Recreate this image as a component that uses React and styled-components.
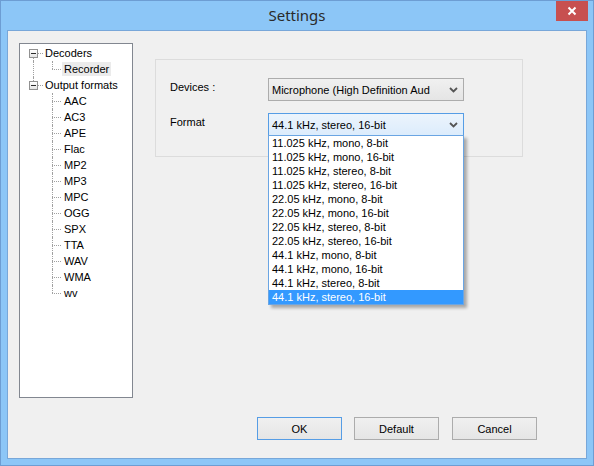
import React from "react";
import styled, { createGlobalStyle } from "styled-components";

const Global = createGlobalStyle`
  html, body { margin: 0; padding: 0; background: #ffffff; }
  body { font-family: "Liberation Sans", Arial, sans-serif; font-size: 11px; color: #000; }
  * { box-sizing: border-box; }
`;

const Window = styled.div`
  width: 594px;
  height: 466px;
  background: #8cc6f7;
  border: 1px solid #6d9dd3;
  display: flex;
  flex-direction: column;
`;

const TitleBar = styled.div`
  height: 29px;
  flex: none;
  display: grid;
  grid-template-columns: 1fr auto 1fr;
`;

const Title = styled.div`
  grid-column: 2;
  font-family: "Noto Sans", "Open Sans", sans-serif;
  font-size: 15px;
  line-height: 29px;
  color: #2a2a2a;
`;

const CloseButton = styled.div`
  grid-column: 3;
  justify-self: end;
  align-self: start;
  width: 32px;
  height: 20px;
  margin-right: 5px;
  background: #c75050;
  display: flex;
  align-items: center;
  justify-content: center;
`;

const Client = styled.div`
  flex: 1;
  margin: 0 6px 6px 6px;
  background: #f0f0f0;
  border: 1px solid #78a7d9;
  padding: 12px 49px 18px 11px;
  display: flex;
  flex-direction: column;
`;

const Body = styled.div`
  display: flex;
  align-items: flex-start;
  gap: 22px;
`;

const TreeBox = styled.div`
  width: 114px;
  height: 355px;
  flex: none;
  background: #ffffff;
  border: 1px solid #828790;
  padding-top: 1px;
`;

const Row = styled.div`
  display: flex;
  height: 16px;
`;

const vertical = {
  full: "top: 0; bottom: 0;",
  top: "top: 0; height: 8px;",
  bottom: "top: 8px; bottom: 0;",
  none: "display: none;",
};

const Branch = styled.span`
  position: relative;
  flex: none;
  width: ${(p) => p.$w}px;
  &::before {
    content: "";
    position: absolute;
    left: ${(p) => p.$x}px;
    ${(p) => vertical[p.$v || "none"]}
    border-left: 1px dotted #a0a0a0;
  }
  &::after {
    content: "";
    position: absolute;
    left: ${(p) => p.$x}px;
    width: ${(p) => p.$h}px;
    top: 8px;
    border-top: 1px dotted #a0a0a0;
    ${(p) => (p.$h ? "" : "display: none;")}
  }
`;

const Expander = styled.span`
  position: absolute;
  left: 9px;
  top: 4px;
  width: 9px;
  height: 9px;
  border: 1px solid #919191;
  background: linear-gradient(#ffffff, #e4e4e4);
  z-index: 1;
  &::after {
    content: "";
    position: absolute;
    left: 1px;
    top: 3px;
    width: 5px;
    height: 1px;
    background: #2b2b2b;
  }
`;

const NodeLabel = styled.span`
  align-self: center;
  height: 14px;
  line-height: 14px;
  padding: 0 2px;
  white-space: nowrap;
  background: ${(p) => (p.$selected ? "#ebebeb" : "transparent")};
`;

const Panel = styled.div`
  margin-top: 16px;
`;

const GroupBox = styled.div`
  width: 368px;
  height: 98px;
  border: 1px solid #dcdcdc;
  padding: 18px 0 0 14px;
  display: grid;
  grid-template-columns: 98px 196px;
  grid-auto-rows: 23px;
  row-gap: 12px;
`;

const FieldLabel = styled.div`
  padding-top: 3px;
  line-height: 13px;
`;

const ComboWrap = styled.div`
  position: relative;
`;

const Combo = styled.div`
  height: 23px;
  display: flex;
  align-items: center;
  justify-content: space-between;
  padding: 0 5px 0 3px;
  border: 1px solid ${(p) => (p.$focused ? "#569de5" : "#acacac")};
  background: ${(p) =>
    p.$focused
      ? "linear-gradient(#ecf4fc, #dcecfc)"
      : "linear-gradient(#f0f0f0, #e5e5e5)"};
  white-space: nowrap;
  overflow: hidden;
`;

const DropList = styled.div`
  position: absolute;
  left: 0;
  top: 22px;
  width: 196px;
  background: #ffffff;
  border: 1px solid #6aa5e3;
  box-shadow: 3px 3px 3px rgba(0, 0, 0, 0.3);
  z-index: 5;
`;

const Option = styled.div`
  height: 14px;
  line-height: 14px;
  padding-left: 3px;
  white-space: nowrap;
  background: ${(p) => (p.$selected ? "#3399ff" : "transparent")};
  color: ${(p) => (p.$selected ? "#ffffff" : "#000000")};
`;

const Footer = styled.div`
  margin-top: 19px;
  display: flex;
  justify-content: flex-end;
`;

const Button = styled.div`
  width: 85px;
  height: 23px;
  margin-left: ${(p) => p.$gap || 0}px;
  border: 1px solid ${(p) => (p.$default ? "#569de5" : "#acacac")};
  background: linear-gradient(#f0f0f0, #e5e5e5);
  display: flex;
  align-items: center;
  justify-content: center;
`;

const Chevron = () => (
  <svg width="9" height="6" viewBox="0 0 9 6">
    <polyline points="1,1 4.5,4.5 8,1" fill="none" stroke="#555" strokeWidth="1.8" />
  </svg>
);

const CloseGlyph = () => (
  <svg width="10" height="10" viewBox="0 0 10 10">
    <path d="M1.5 1.5 L8.5 8.5 M8.5 1.5 L1.5 8.5" stroke="#fff" strokeWidth="2" />
  </svg>
);

const formats = ["AAC", "AC3", "APE", "Flac", "MP2", "MP3", "MPC", "OGG", "SPX", "TTA", "WAV", "WMA", "wv"];

const options = [
  "11.025 kHz, mono, 8-bit",
  "11.025 kHz, mono, 16-bit",
  "11.025 kHz, stereo, 8-bit",
  "11.025 kHz, stereo, 16-bit",
  "22.05 kHz, mono, 8-bit",
  "22.05 kHz, mono, 16-bit",
  "22.05 kHz, stereo, 8-bit",
  "22.05 kHz, stereo, 16-bit",
  "44.1 kHz, mono, 8-bit",
  "44.1 kHz, mono, 16-bit",
  "44.1 kHz, stereo, 8-bit",
  "44.1 kHz, stereo, 16-bit",
];

const ParentRow = ({ label, v }) => (
  <Row>
    <Branch $w={23} $x={13} $v={v} $h={10}>
      <Expander />
    </Branch>
    <NodeLabel>{label}</NodeLabel>
  </Row>
);

const ChildRow = ({ label, guide, v, selected }) => (
  <Row>
    <Branch $w={28} $x={13} $v={guide ? "full" : "none"} $h={0} />
    <Branch $w={14} $x={4} $v={v} $h={9} />
    <NodeLabel $selected={selected}>{label}</NodeLabel>
  </Row>
);

export default function App() {
  return (
    <>
      <Global />
      <Window>
        <TitleBar>
          <Title>Settings</Title>
          <CloseButton>
            <CloseGlyph />
          </CloseButton>
        </TitleBar>
        <Client>
          <Body>
            <TreeBox>
              <ParentRow label="Decoders" v="bottom" />
              <ChildRow label="Recorder" guide v="top" selected />
              <ParentRow label="Output formats" v="top" />
              {formats.map((f, i) => (
                <ChildRow key={f} label={f} v={i === formats.length - 1 ? "top" : "full"} />
              ))}
            </TreeBox>
            <Panel>
              <GroupBox>
                <FieldLabel>Devices :</FieldLabel>
                <Combo>
                  <span>Microphone (High Definition Aud</span>
                  <Chevron />
                </Combo>
                <FieldLabel>Format</FieldLabel>
                <ComboWrap>
                  <Combo $focused>
                    <span>44.1 kHz, stereo, 16-bit</span>
                    <Chevron />
                  </Combo>
                  <DropList>
                    {options.map((o, i) => (
                      <Option key={o} $selected={i === options.length - 1}>
                        {o}
                      </Option>
                    ))}
                  </DropList>
                </ComboWrap>
              </GroupBox>
            </Panel>
          </Body>
          <Footer>
            <Button $default>OK</Button>
            <Button $gap={12}>Default</Button>
            <Button $gap={13}>Cancel</Button>
          </Footer>
        </Client>
      </Window>
    </>
  );
}
